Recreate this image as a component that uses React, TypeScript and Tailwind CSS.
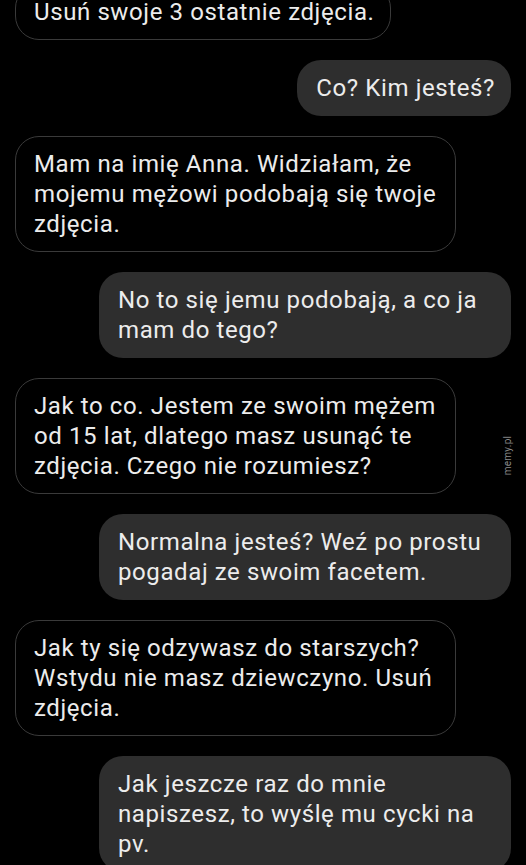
const messages: { from: 'them' | 'me'; text: string }[] = [
  { from: 'them', text: 'Usuń swoje 3 ostatnie zdjęcia.' },
  { from: 'me', text: 'Co? Kim jesteś?' },
  { from: 'them', text: 'Mam na imię Anna. Widziałam, że mojemu mężowi podobają się twoje zdjęcia.' },
  { from: 'me', text: 'No to się jemu podobają, a co ja mam do tego?' },
  { from: 'them', text: 'Jak to co. Jestem ze swoim mężem od 15 lat, dlatego masz usunąć te zdjęcia. Czego nie rozumiesz?' },
  { from: 'me', text: 'Normalna jesteś? Weź po prostu pogadaj ze swoim facetem.' },
  { from: 'them', text: 'Jak ty się odzywasz do starszych? Wstydu nie masz dziewczyno. Usuń zdjęcia.' },
  { from: 'me', text: 'Jak jeszcze raz do mnie napiszesz, to wyślę mu cycki na pv.' },
];

export default function App() {
  return (
    <div className="relative w-[526px] h-[865px] overflow-hidden bg-black font-['Roboto','Noto_Sans',sans-serif] text-[#ececec]">
      <div className="flex flex-col gap-[20px] px-[15px] -mt-[16px]">
        {messages.map((m, i) =>
          m.from === 'them' ? (
            <div
              key={i}
              className="self-start w-fit max-w-[441px] rounded-[24px] border-[1.5px] border-[#3a3a3a] bg-black pl-[18px] pr-[16px] py-[12px] text-[24px] leading-[30px] tracking-[0.6px]"
            >
              {m.text}
            </div>
          ) : (
            <div
              key={i}
              className="self-end w-fit max-w-[412px] rounded-[24px] bg-[#2e2e2e] pl-[19px] pr-[16px] py-[13px] text-[24px] leading-[30px] tracking-[0.6px]"
            >
              {m.text}
            </div>
          )
        )}
      </div>

      {/* watermark */}
      <div className="absolute left-[488px] top-[448px] -rotate-90 text-[10px] text-[#8a8a8a] tracking-wide">
        memy.pl
      </div>
    </div>
  );
}
